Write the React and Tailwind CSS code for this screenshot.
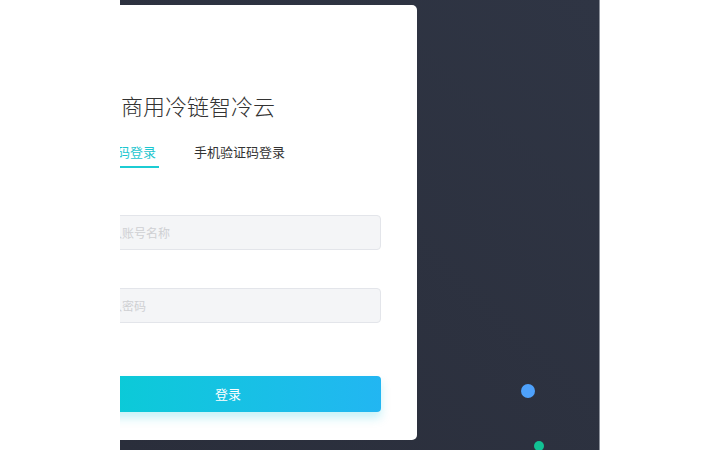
import { useState } from 'react';

const font = { fontFamily: '"Noto Sans CJK SC", "Noto Sans", sans-serif' };

function LoginCard() {
  const [tab, setTab] = useState('account');
  const tabs = [
    { key: 'account', label: '账号密码登录' },
    { key: 'sms', label: '手机验证码登录' },
  ];

  return (
    <div className="-ml-[81px] mt-[5px] flex h-[435px] w-[378px] shrink-0 flex-col rounded-r-[5px] bg-white pl-9 pr-9 pt-[85px]">
      <h1 className="ml-[46px] h-[30px] text-[22px] font-light leading-[30px] text-[#333]">商用冷链智冷云</h1>

      <div className="mt-[22px] flex gap-8">
        {tabs.map((item) => (
          <button
            key={item.key}
            type="button"
            onClick={() => setTab(item.key)}
            className={
              tab === item.key
                ? 'border-b-2 border-[#1cccd3] px-[3px] pb-1 text-[13px] leading-5 text-[#1cc6cf]'
                : 'border-b-2 border-transparent px-[3px] pb-1 text-[13px] leading-5 text-[#333]'
            }
          >
            {item.label}
          </button>
        ))}
      </div>

      <input
        className="mt-[47px] h-[35px] w-full rounded border border-[#e3e5ea] bg-[#f4f5f7] px-[10px] text-xs text-[#333] outline-none placeholder:text-[#cfd0d3]"
        placeholder="请输入账号名称"
      />
      <input
        type="password"
        className="mt-[38px] h-[35px] w-full rounded border border-[#e3e5ea] bg-[#f4f5f7] px-[10px] text-xs text-[#333] outline-none placeholder:text-[#cfd0d3]"
        placeholder="请输入密码"
      />

      <button
        type="button"
        className="mt-[53px] h-9 w-full rounded bg-gradient-to-r from-[#06cdd3] to-[#22b6f2] text-[13px] text-white shadow-[0_6px_10px_rgba(30,205,225,0.25)]"
      >
        登录
      </button>
    </div>
  );
}

export default function App() {
  return (
    <div className="flex h-[450px] w-[720px] bg-white pl-[120px]" style={font}>
      <div className="relative flex h-[450px] w-[480px] overflow-hidden border-r border-[#8d929c] bg-gradient-to-bl from-[#2f3544] to-[#2a2e3b]">
        <LoginCard />
        <span className="absolute left-[401px] top-[384px] h-[14px] w-[14px] rounded-full bg-[#4ea1fb]" />
        <span className="absolute left-[414px] top-[441px] h-[10px] w-[10px] rounded-full bg-[#12c294]" />
      </div>
    </div>
  );
}
